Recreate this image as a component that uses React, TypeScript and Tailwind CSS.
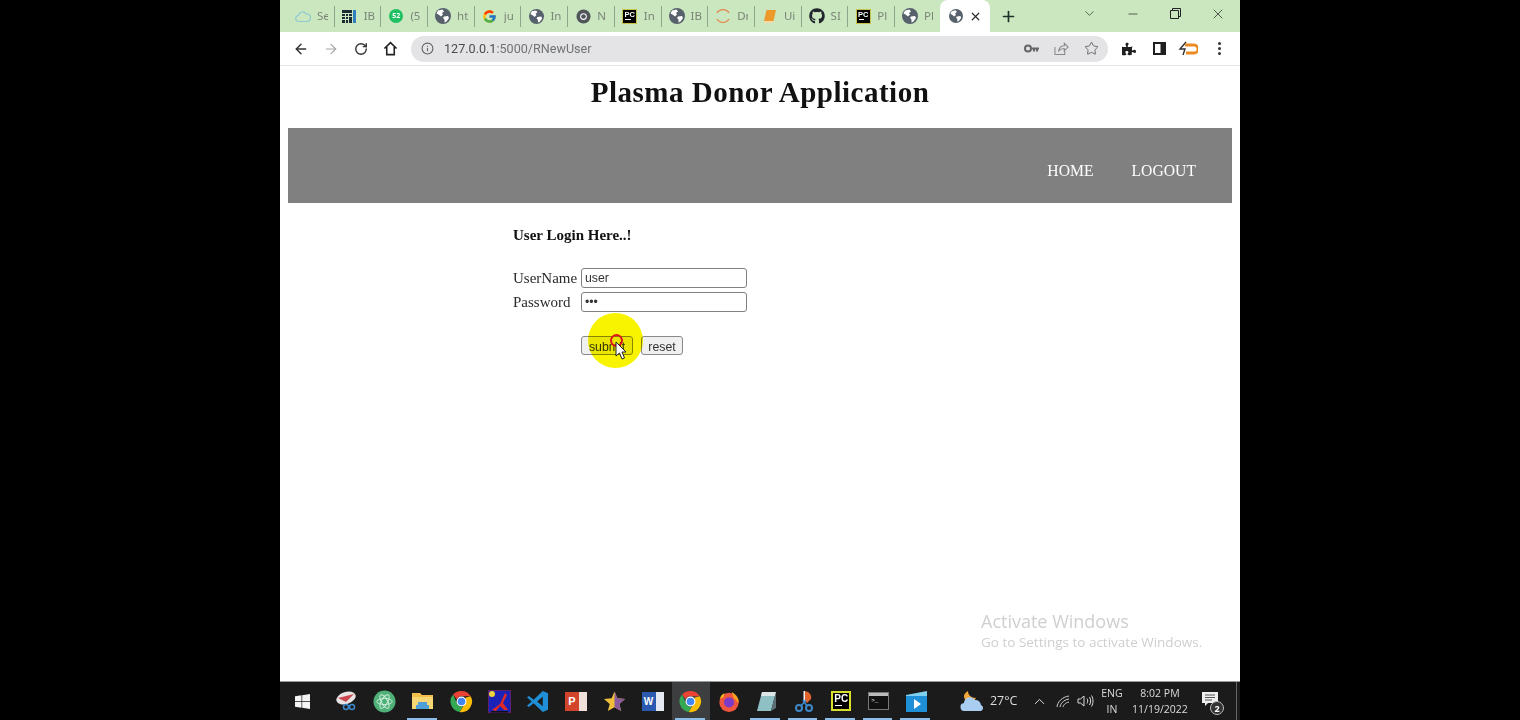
import { ArrowLeft, ArrowRight, ChevronDown, ChevronUp, Info, Minus, Plus, RotateCw, Star, X } from 'lucide-react';
import { FaGithub, FaPuzzlePiece } from 'react-icons/fa';
import { FcGoogle } from 'react-icons/fc';

function Globe({ size = 16 }: { size?: number }) {
  return (
    <svg width={size} height={size} viewBox="0 0 16 16">
      <circle cx="8" cy="8" r="8" fill="#56616b" />
      <path d="M3 2.500 7.500 1.500 9 3.500 7 5 8 6.500 6 8.500 3.500 6.500 1.500 5.500Z" fill="#fff" />
      <path d="M9 8.500 13 8 14 10 11.500 13.500 9.500 14.500 9.500 11.500 8 10Z" fill="#fff" />
    </svg>
  );
}

function ChromeIcon({ size = 16 }: { size?: number }) {
  return (
    <svg width={size} height={size} viewBox="0 0 24 24">
      <path d="M12 1a11 11 0 0 1 9.500 5.500H12a5.500 5.500 0 0 0-5 3.200L3.200 4.800A11 11 0 0 1 12 1Z" fill="#ea4335" />
      <path d="M3.200 4.800 7.600 14.700a5.500 5.500 0 0 0 5.600 2.700L10.200 22.900A11 11 0 0 1 3.200 4.800Z" fill="#34a853" />
      <path d="M21.500 6.500A11 11 0 0 1 10.200 22.900L14.800 15A5.500 5.500 0 0 0 15.800 8Z" fill="#fbbc04" />
      <circle cx="12" cy="12" r="5.200" fill="#fff" />
      <circle cx="12" cy="12" r="4" fill="#4285f4" />
    </svg>
  );
}

function PyCharm({ size = 16, yellow = false }: { size?: number; yellow?: boolean }) {
  return (
    <div
      className={`flex flex-col items-center bg-black font-['Liberation_Sans',sans-serif] font-bold leading-none text-white ${yellow ? 'border-2 border-[#d8e02c]' : 'border border-[#c9c34a]'}`}
      style={{ width: size, height: size, fontSize: size * 0.5 }}
    >
      <span className="mt-[1px]">PC</span>
      <span className="mt-[1px] mr-auto ml-[2px] h-[1px] w-[40%] bg-white" />
    </div>
  );
}

function Tab({ icon, label }: { icon: React.ReactNode; label: string }) {
  return (
    <div className="flex h-[21px] w-[46.7px] shrink-0 items-center gap-[6px] overflow-hidden border-r border-[#8fa58a] pl-[7px]">
      <span className="flex w-4 shrink-0 justify-center">{icon}</span>
      <span className="w-[11px] shrink-0 overflow-hidden whitespace-nowrap text-[11.5px] text-[#7b8577]">{label}</span>
    </div>
  );
}

const tabs: { label: string; icon: React.ReactNode }[] = [
  {
    label: 'Se',
    icon: (
      <svg width="16" height="14" viewBox="0 0 16 14" fill="none" stroke="#8fcbd1" strokeWidth="1.200">
        <path d="M4 12.500a3 3 0 0 1-.5-6 4 4 0 0 1 7.500-1.500 3.800 3.800 0 0 1 1.500 7.500Z" />
      </svg>
    ),
  },
  {
    label: 'IB',
    icon: (
      <svg width="15" height="15" viewBox="0 0 15 15">
        <path d="M0 1h10v3H0zM0 5h3v2H0zM4 5h2v2H4zM7 5h3v2H7zM0 8h3v2H0zM4 8h2v2H4zM0 11h3v3H0zM4 11h2v3H4zM7 8h3v6H7z" fill="#1d2b33" />
        <path d="M11 1h3v13h-3z" fill="#2f7fc1" />
      </svg>
    ),
  },
  {
    label: '(5',
    icon: (
      <span className="flex h-[14px] w-[14px] items-center justify-center rounded-full bg-[#1fbf63] text-[7px] font-bold text-white">52</span>
    ),
  },
  { label: 'ht', icon: <Globe /> },
  { label: 'ju', icon: <FcGoogle size={15} /> },
  { label: 'In', icon: <Globe size={15} /> },
  {
    label: 'N',
    icon: (
      <svg width="15" height="15" viewBox="0 0 16 16">
        <circle cx="8" cy="8" r="7.500" fill="#50555a" />
        <circle cx="8" cy="8" r="3.600" fill="#fff" />
        <circle cx="8" cy="8" r="2.500" fill="#50555a" />
      </svg>
    ),
  },
  { label: 'In', icon: <PyCharm size={15} /> },
  { label: 'IB', icon: <Globe /> },
  {
    label: 'Dr',
    icon: (
      <svg width="16" height="16" viewBox="0 0 16 16" fill="none" stroke="#e8844a" strokeWidth="1.300">
        <path d="M2 5a7 7 0 0 1 12 0M2 11a7 7 0 0 0 12 0" />
      </svg>
    ),
  },
  {
    label: 'Ui',
    icon: (
      <svg width="14" height="15" viewBox="0 0 14 15">
        <path d="M3.500 1H13L10.500 12H1Z" fill="#ec9a2b" />
        <path d="M1 12h9.500l-.5 2H1.500Z" fill="#f8d9a8" />
      </svg>
    ),
  },
  { label: 'SI', icon: <FaGithub size={16} color="#20262c" /> },
  { label: 'Pl', icon: <PyCharm size={15} /> },
  { label: 'Pl', icon: <Globe /> },
];

function TabStrip() {
  return (
    <div className="flex h-8 shrink-0 items-center bg-[#cbe7c0] pl-2">
      <div className="flex items-center">
        {tabs.map((t, i) => (
          <Tab key={i} icon={t.icon} label={t.label} />
        ))}
      </div>
      <div className="-ml-[2px] flex h-[32px] w-[50px] shrink-0 items-center gap-[6px] rounded-t-[8px] bg-white pl-[9px]">
        <Globe size={14} />
        <X size={13} strokeWidth={2.2} color="#2a2e31" />
      </div>
      <Plus size={17} strokeWidth={2.4} color="#20332a" className="ml-[10px]" />
      <div className="mb-[5px] ml-auto flex items-center">
        <ChevronDown size={15} strokeWidth={1.3} color="#3b4a3a" />
        <Minus size={14} strokeWidth={1.2} color="#222" className="ml-[29px]" />
        <svg width="11" height="11" viewBox="0 0 11 11" fill="none" stroke="#222" className="ml-[30px]">
          <path d="M.5 2.500h8v8h-8zM2.500 2.500v-2h8v8h-2" />
        </svg>
        <X size={16} strokeWidth={1.1} color="#222" className="mr-[14px] ml-[29px]" />
      </div>
    </div>
  );
}

function Toolbar() {
  return (
    <div className="flex h-[34px] shrink-0 items-center border-b border-[#e4e4e4] bg-white pl-[13px]">
      <ArrowLeft size={16} strokeWidth={2.2} color="#333" />
      <ArrowRight size={16} strokeWidth={1.8} color="#a6a6a6" className="ml-[14px]" />
      <RotateCw size={14} strokeWidth={2.4} color="#333" className="ml-[15px]" />
      <svg width="15" height="15" viewBox="0 0 16 16" fill="none" stroke="#222" strokeWidth="1.700" className="ml-[15px]">
        <path d="M1.500 8 8 1.800 14.500 8M4 6.500V14.500h8V6.500" />
      </svg>
      <div className="ml-[13px] flex h-[26px] w-[697px] items-center rounded-full bg-[#e4e3e5] pl-[10px] pr-[9px]">
        <Info size={13} color="#5f6368" />
        <span className="ml-[10px] mt-[1px] font-['Roboto',sans-serif] text-[12.6px] text-[#4a4d51]">
          127.0.0.1<span className="text-[#6f7377]">:5000/RNewUser</span>
        </span>
        <div className="ml-auto flex items-center gap-[15px]">
          <svg width="15" height="9" viewBox="0 0 15 9">
            <circle cx="4" cy="4.500" r="3" fill="none" stroke="#666" strokeWidth="2" />
            <path d="M7 3.500h8v2h-1v2h-2v-2h-1v2H9v-2H7Z" fill="#666" />
          </svg>
          <svg width="15" height="15" viewBox="0 0 16 16" fill="none" stroke="#85888c" strokeWidth="1.100">
            <path d="M1 6.500v8h10.500V11M5 10.500C5.500 7 8 5 11 5V2.500L15 6.500 11 10.500V8C8.500 8 6.500 8.800 5 10.500Z" />
          </svg>
          <Star size={15} strokeWidth={1.5} color="#5f6368" />
        </div>
      </div>
      <FaPuzzlePiece size={14} color="#1f1f1f" className="ml-[14px]" />
      <svg width="13" height="13" viewBox="0 0 13 13" className="ml-[17px]">
        <path d="M0 0h13v13H0z" fill="#1f1f1f" />
        <path d="M2 2h5.500v9H2z" fill="#fff" />
      </svg>
      <svg width="20" height="16" viewBox="0 0 20 16" fill="none" className="ml-[12px]">
        <path d="M8 1 2 8h5L5 14" stroke="#333" strokeWidth="1.400" />
        <path d="M7 4h9a2.500 2.500 0 0 1 0 8H8" stroke="#ec8a20" strokeWidth="2.800" />
      </svg>
      <div className="ml-[20px] flex flex-col gap-[2px]">
        <span className="h-[3px] w-[3px] rounded-full bg-[#333]" />
        <span className="h-[3px] w-[3px] rounded-full bg-[#333]" />
        <span className="h-[3px] w-[3px] rounded-full bg-[#333]" />
      </div>
    </div>
  );
}

function LoginForm() {
  const field =
    "h-[20px] w-[166px] rounded-[3px] border border-[#808080] bg-white px-[3px] font-['Liberation_Sans',sans-serif] text-[12.3px] text-[#333] outline-none";
  const button =
    "h-[19px] rounded-[3px] border border-[#8a8a8a] bg-[#f0f0f0] pb-[2px] font-['Liberation_Sans',sans-serif] text-[12.3px] text-[#333]";
  return (
    <div className="relative ml-[233px] mt-[23px] text-[15px] leading-[20px] text-[#2a2a2a]">
      <div className="text-[15px] font-bold leading-[18px] text-[#111]">User Login Here..!</div>
      <div className="mt-[24px] flex items-center">
        <span className="w-[68px]">UserName</span>
        <input className={field} defaultValue="user" readOnly />
      </div>
      <div className="mt-[4px] flex items-center">
        <span className="w-[68px]">Password</span>
        <input className={field} type="password" defaultValue="abc" readOnly />
      </div>
      <div className="ml-[68px] mt-[24px] flex gap-2">
        <button className={`${button} w-[52px]`}>submit</button>
        <button className={`${button} w-[42px]`}>reset</button>
      </div>
      {/* recorder's click highlight + cursor */}
      <div className="absolute left-[75px] top-[87px] h-[55px] w-[55px] rounded-full bg-[#f8f400] mix-blend-multiply" />
      <div className="absolute left-[97px] top-[108px] h-[13px] w-[13px] rounded-full border-[2.5px] border-[#e0141c]" />
      <svg width="12" height="19" viewBox="0 0 12 19" className="absolute left-[102px] top-[115px]">
        <path d="M1 1v14l3.500-3 2.500 6 2.500-1-2.500-6H11Z" fill="#fff" stroke="#222" strokeWidth="1" />
      </svg>
    </div>
  );
}

function Page() {
  return (
    <div className="relative flex-1 bg-white font-['Liberation_Serif',serif]">
      <h1 className="mt-[9px] text-center text-[29px] font-bold leading-[34px] tracking-[0.5px] text-[#111]">Plasma Donor Application</h1>
      <div className="mx-2 mt-[19px] flex h-[75px] items-center justify-end gap-[38px] bg-[#808080] pr-[36px] pt-[11px] text-[15.7px] text-white">
        <span>HOME</span>
        <span>LOGOUT</span>
      </div>
      <LoginForm />
      <div className="absolute left-[701px] top-[544px] font-['Open_Sans',sans-serif] text-[#cfcfd2]">
        <div className="text-[18px] leading-[22px]">Activate Windows</div>
        <div className="text-[13.5px] leading-[20px]">Go to Settings to activate Windows.</div>
      </div>
    </div>
  );
}

const taskIcons: { node: React.ReactNode; active?: boolean; running?: boolean }[] = [
  {
    node: (
      <svg width="22" height="20" viewBox="0 0 22 20">
        <ellipse cx="11" cy="7" rx="10" ry="6" fill="#e9e4e4" transform="rotate(-18 11 7)" />
        <path d="M3 7 19 3 11 11Z" fill="#c9484f" />
        <circle cx="11" cy="16" r="2.500" fill="none" stroke="#3d88c8" strokeWidth="1.500" />
        <circle cx="17" cy="16" r="2.500" fill="none" stroke="#3d88c8" strokeWidth="1.500" />
      </svg>
    ),
  },
  {
    node: (
      <svg width="23" height="23" viewBox="0 0 24 24">
        <circle cx="12" cy="12" r="11.500" fill="#4fb078" />
        <g fill="none" stroke="#cdeedb" strokeWidth="1">
          <ellipse cx="12" cy="12" rx="8" ry="3.200" />
          <ellipse cx="12" cy="12" rx="8" ry="3.200" transform="rotate(60 12 12)" />
          <ellipse cx="12" cy="12" rx="8" ry="3.200" transform="rotate(120 12 12)" />
        </g>
      </svg>
    ),
  },
  {
    running: true,
    node: (
      <svg width="21" height="18" viewBox="0 0 21 18">
        <path d="M0 1h8l2 2h11v14H0Z" fill="#f0c04a" />
        <path d="M0 5h21v12H0Z" fill="#f7d674" />
        <path d="M6 10h9v3h2v4H4v-4h2Z" fill="#4f9fd8" />
      </svg>
    ),
  },
  { node: <ChromeIcon size={23} /> },
  {
    node: (
      <svg width="23" height="23" viewBox="0 0 23 23">
        <path d="M0 0h23v23H0Z" fill="#1b22b8" stroke="#9c2020" />
        <circle cx="4" cy="4" r="3" fill="#f1d43c" />
        <path d="M4 20 12 14 17 3 19 5 15 13 20 20 16 20 12 16 8 21Z" fill="#e02a28" />
        <path d="M3 21h17v1.500H3Z" fill="#111" />
      </svg>
    ),
  },
  {
    node: (
      <svg width="23" height="23" viewBox="0 0 24 24">
        <path d="M17.500 1 23 3.500v17L17.500 23 8 13.800 3 17.800 1 16.500 6 12 1 7.500 3 6.200 8 10.200Z" fill="#1f8fd8" />
        <path d="M17.500 7 11.500 12l6 5Z" fill="#1b1b1b" />
      </svg>
    ),
  },
  {
    node: (
      <div className="relative h-[19px] w-[22px]">
        <div className="absolute right-0 top-0 h-full w-[15px] bg-[#f0e0da]" />
        <div className="absolute left-0 top-0 flex h-full w-[14px] items-center justify-center bg-[#d2452c] font-['Liberation_Sans',sans-serif] text-[11px] font-bold text-white">P</div>
      </div>
    ),
  },
  {
    node: (
      <svg width="23" height="23" viewBox="0 0 24 24">
        <path d="M12 1.500 15 8.500 23 9.500 17 14.500 19 22 12 18 5 22 7 14.500 1 9.500 9 8.500Z" fill="#f0bf3a" />
        <path d="M12 1.500 15 8.500 23 9.500 17 14.500 19 22 12 18Z" fill="#8a5aa0" />
      </svg>
    ),
  },
  {
    node: (
      <div className="relative h-[19px] w-[22px]">
        <div className="absolute right-0 top-0 h-full w-[15px] bg-[#e4e9f2]" />
        <div className="absolute left-0 top-0 flex h-full w-[14px] items-center justify-center bg-[#2b5bb0] font-['Liberation_Sans',sans-serif] text-[10px] font-bold text-white">W</div>
      </div>
    ),
  },
  { active: true, running: true, node: <ChromeIcon size={23} /> },
  {
    node: (
      <svg width="22" height="23" viewBox="0 0 24 24">
        <circle cx="12" cy="13" r="10.500" fill="#f0553f" />
        <path d="M15 1.500c5 3 8 7 7.500 12L17 8Z" fill="#f9a31f" />
        <path d="M2 9c1-3 3-5 5-6l-1 4Z" fill="#f9c11f" />
        <circle cx="12" cy="13" r="5.500" fill="#7a3bc8" />
      </svg>
    ),
  },
  {
    running: true,
    node: (
      <svg width="21" height="21" viewBox="0 0 21 21">
        <path d="M6 1h14L15 20H1Z" fill="#8fc1c4" />
        <path d="M6 1h14l-1 4H5Z" fill="#dce6e6" />
        <path d="M15 20 20 1v16Z" fill="#5b6f75" />
      </svg>
    ),
  },
  {
    running: true,
    node: (
      <svg width="20" height="23" viewBox="0 0 20 23">
        <path d="M10 1c5 0 8 4 7 8l-4 4-3-3Z" fill="#e2642c" />
        <path d="M9.500 1v12h1.500V1Z" fill="#f0f0f0" />
        <circle cx="5" cy="18" r="3" fill="none" stroke="#3d88c8" strokeWidth="2" />
        <circle cx="15" cy="18" r="3" fill="none" stroke="#3d88c8" strokeWidth="2" />
        <path d="M7 16 12 10M13 16 9 10" stroke="#3d88c8" strokeWidth="1.500" />
      </svg>
    ),
  },
  { running: true, node: <PyCharm size={20} yellow /> },
  {
    running: true,
    node: (
      <div className="flex h-[18px] w-[21px] flex-col border border-[#777] bg-[#111]">
        <div className="h-[3px] bg-[#bbb]" />
        <div className="ml-[2px] mt-[2px] font-['Liberation_Mono',monospace] text-[6px] leading-none text-white">{'>_'}</div>
      </div>
    ),
  },
  {
    running: true,
    node: (
      <svg width="23" height="23" viewBox="0 0 23 23">
        <path d="M1 5 22 1v5H1Z" fill="#7fd0f0" />
        <path d="M1 6h21v16H1Z" fill="#1f8fd8" />
        <path d="M9 9 16 14 9 19Z" fill="#fff" />
      </svg>
    ),
  },
];

function Taskbar() {
  return (
    <div className="flex h-[39px] shrink-0 items-stretch border-t border-t-[#9a9a9a] bg-[#1b1b1c] font-['Open_Sans',sans-serif] text-[#dcdcdc]">
      <div className="flex w-[47px] items-center justify-center pr-[2px]">
        <svg width="15" height="15" viewBox="0 0 15 15" fill="#f4f4f4">
          <path d="M0 2.200 6.500 1.300V7H0ZM7.200 1.200 15 0V7H7.200ZM0 7.800H6.500V13.700L0 12.800ZM7.200 7.800H15V15L7.200 13.800Z" />
        </svg>
      </div>
      {taskIcons.map((t, i) => (
        <div
          key={i}
          className={`relative flex shrink-0 items-center justify-center ${i < 10 ? 'w-[38.3px]' : 'w-[37.5px]'} ${t.active ? 'bg-[#3d3e40]' : ''}`}
        >
          {t.node}
          {t.running && <div className="absolute bottom-0 left-[3px] right-[5px] h-[2px] bg-[#8cbce8]" />}
        </div>
      ))}
      <div className="ml-[25px] flex items-center">
        <svg width="26" height="24" viewBox="0 0 26 24">
          <path d="M8 2c0 4 3 7 8 7-1 2-3 4-6 4-4 0-6-3-6-6 0-2 2-4 4-5Z" fill="#f0a83a" />
          <path d="M5 22a4 4 0 0 1-1-8 6 6 0 0 1 11-3 5.500 5.500 0 0 1 6 5 3.200 3.200 0 0 1 0 6Z" fill="#a8cdf0" />
        </svg>
        <span className="ml-[4px] w-[35px] text-[12.5px]">27°C</span>
        <ChevronUp size={17} strokeWidth={1.4} className="ml-[6px]" />
        <svg width="14" height="13" viewBox="0 0 14 13" fill="none" stroke="#cfcfcf" strokeWidth="1" className="ml-[8px]">
          <path d="M1 12C1.500 7 6 2 13 1M4 12c.5-3 3-7 9-8M7 12c.5-2 2-4 6-5" />
        </svg>
        <svg width="17" height="14" viewBox="0 0 17 14" fill="none" stroke="#dcdcdc" strokeWidth="1" className="ml-[7px]">
          <path d="M1 5h2.500L7 2v10L3.500 9H1ZM10 4.500c1 1.500 1 3.500 0 5M12.500 3c1.500 2.500 1.500 5.500 0 8M14.500 1.500c2 3.500 2 7.500 0 11" />
        </svg>
      </div>
      <div className="ml-[2px] flex w-[32px] flex-col items-center justify-center text-[10.5px] leading-[16px]">
        <span>ENG</span>
        <span>IN</span>
      </div>
      <div className="ml-[1px] flex w-[62px] flex-col items-center justify-center text-[10.5px] leading-[16px]">
        <span>8:02 PM</span>
        <span>11/19/2022</span>
      </div>
      <div className="relative ml-[11px] flex items-center pb-[3px]">
        <svg width="16" height="15" viewBox="0 0 16 15" fill="#eee">
          <path d="M0 0h16v11H6l-3 3v-3H0Z" />
          <path d="M3 3h10M3 5.500h10M3 8h7" stroke="#555" strokeWidth="1" />
        </svg>
        <span className="absolute left-[8px] top-[19px] flex h-[14px] w-[14px] items-center justify-center rounded-full border border-[#bbb] bg-[#333] text-[9px] font-bold leading-none text-white">2</span>
      </div>
      <div className="ml-auto mr-[3px] w-[1px] bg-[#666]" />
    </div>
  );
}

export default function App() {
  return (
    <div className="flex h-[720px] w-[1520px] justify-center overflow-hidden bg-black">
      <div className="flex h-full w-[960px] flex-col">
        <TabStrip />
        <Toolbar />
        <Page />
        <Taskbar />
      </div>
    </div>
  );
}
